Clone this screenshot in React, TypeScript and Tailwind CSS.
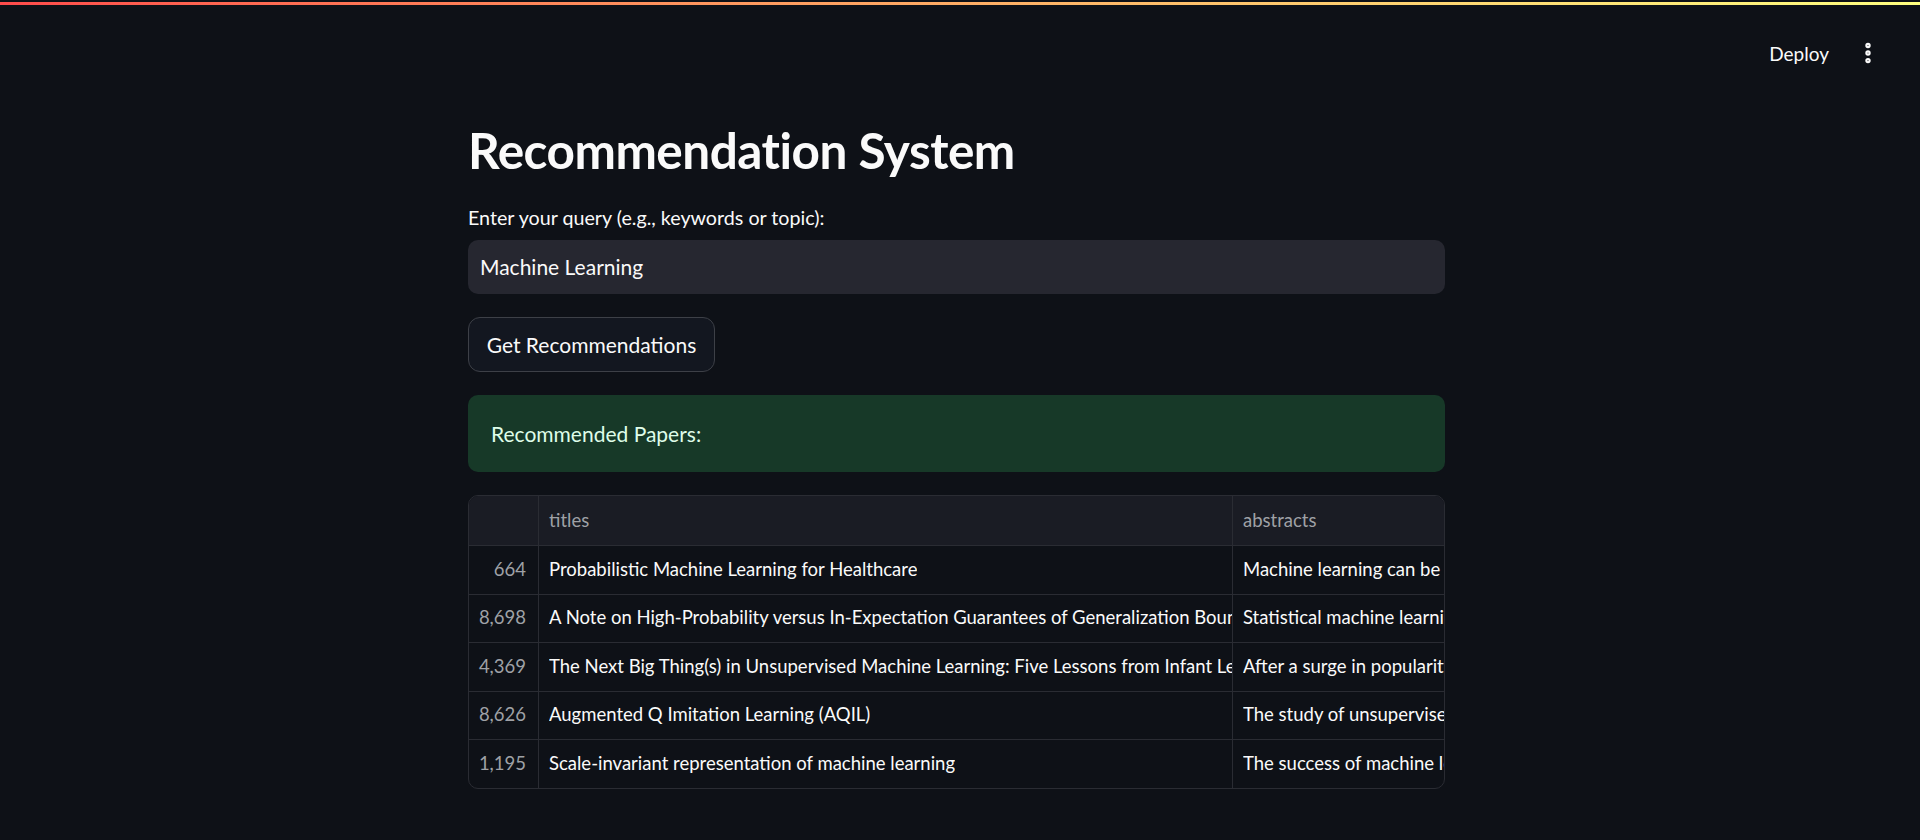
import React from "react";
import { EllipsisVertical } from "lucide-react";

type Paper = { id: string; title: string; abstract: string };

const papers: Paper[] = [
  {
    id: "664",
    title: "Probabilistic Machine Learning for Healthcare",
    abstract: "Machine learning can be used to make sense of healthcare data. Probabilistic machine learning models help provide",
  },
  {
    id: "8,698",
    title: "A Note on High-Probability versus In-Expectation Guarantees of Generalization Bounds in Machine Learning",
    abstract: "Statistical machine learning theory often tries to give generalization guarantees of machine learning models",
  },
  {
    id: "4,369",
    title: "The Next Big Thing(s) in Unsupervised Machine Learning: Five Lessons from Infant Learning",
    abstract: "After a surge in popularity of supervised Deep Learning, the desire to reduce the dependence on curated",
  },
  {
    id: "8,626",
    title: "Augmented Q Imitation Learning (AQIL)",
    abstract: "The study of unsupervised learning can be generally divided into two categories: imitation learning and",
  },
  {
    id: "1,195",
    title: "Scale-invariant representation of machine learning",
    abstract: "The success of machine learning stems from its structured data representation. Similar data have close",
  },
];

const font = { fontFamily: '"Source Sans Pro", Lato, "Noto Sans", sans-serif' };

export default function App() {
  return (
    <div className="min-h-[840px] bg-[#0e1117] text-[#fafafa]" style={font}>
      {/* top decoration */}
      <div className="pt-[2px]">
        <div className="h-[3px] bg-gradient-to-r from-[#ff4b4b] to-[#ffff80]" />
      </div>

      <header className="flex h-[96px] items-center justify-end pr-[32px]">
        <button className="text-[19px] leading-none text-[#fafafa]">Deploy</button>
        <button className="ml-[19px] flex h-[40px] w-[40px] items-center justify-center text-[#fafafa]">
          <EllipsisVertical size={26} strokeWidth={3} />
        </button>
      </header>

      <main className="ml-[468px] w-[977px] pt-[19px]">
        <h1 className="h-[60px] text-[49.5px] font-bold leading-[60px] tracking-[-0.5px]">Recommendation System</h1>

        <label className="mt-[26px] block h-[24px] text-[19.7px] leading-[24px]">
          Enter your query (e.g., keywords or topic):
        </label>
        <div className="mt-[10px] flex h-[54px] items-center rounded-[10px] bg-[#262730] px-[12px] text-[21px]">
          Machine Learning
        </div>

        <button className="mt-[23px] flex h-[55px] w-[247px] items-center justify-center rounded-[12px] border border-[#3d4047] bg-[#131720] text-[21px]">
          Get Recommendations
        </button>

        <div className="mt-[23px] flex h-[77px] items-center rounded-[10px] bg-[#173928] px-[23px] text-[21px] text-[#dffde9]">
          Recommended Papers:
        </div>

        <div className="mt-[23px] overflow-hidden rounded-[10px] border border-[#2a2c33] text-[18.5px]">
          <div className="grid h-[49px] grid-cols-[70px_694px_1fr] bg-[#1a1c24] text-[#9fa1a6]">
            <div className="border-r border-[#2a2c33]" />
            <div className="flex items-center border-r border-[#2a2c33] pl-[10px]">titles</div>
            <div className="flex items-center pl-[10px]">abstracts</div>
          </div>
          {papers.map((p) => (
            <div
              key={p.id}
              className="grid h-[48.5px] grid-cols-[70px_694px_1fr] border-t border-[#2a2c33]"
            >
              <div className="flex items-center justify-end border-r border-[#2a2c33] pr-[12px] text-[#9fa1a6]">
                {p.id}
              </div>
              <div className="flex min-w-0 items-center overflow-hidden border-r border-[#2a2c33] pl-[10px]">
                <span className="block overflow-hidden whitespace-nowrap">{p.title}</span>
              </div>
              <div className="flex min-w-0 items-center overflow-hidden pl-[10px]">
                <span className="block overflow-hidden whitespace-nowrap">{p.abstract}</span>
              </div>
            </div>
          ))}
        </div>
      </main>
    </div>
  );
}
